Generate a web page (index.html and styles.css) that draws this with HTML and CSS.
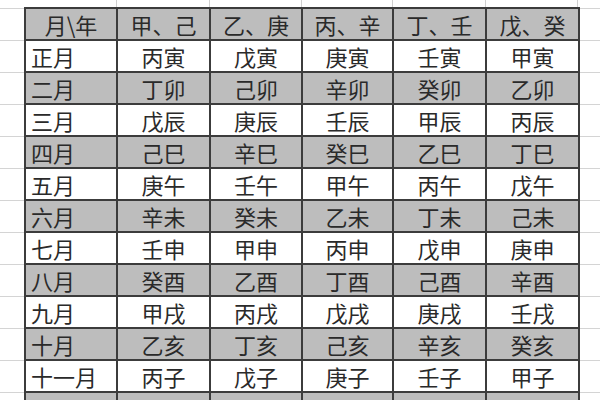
FILE: index.html
```html
<!DOCTYPE html>
<html lang="zh">
<head>
<meta charset="utf-8">
<link rel="stylesheet" href="styles.css">
<title>月干支表</title>
</head>
<body>
<div class="sheet">
  <div class="top-strip">
    <span class="tcell w0"></span>
    <span class="tcell w1"></span>
    <span class="tcell w2"></span>
    <span class="tcell w3"></span>
    <span class="tcell w4"></span>
    <span class="tcell w5"></span>
    <span class="tcell w6"></span>
  </div>
  <div class="row-wrap">
    <div class="side side-left"></div>
    <table class="cal">
      <colgroup>
        <col class="c1"><col class="c2"><col class="c3"><col class="c4"><col class="c5"><col class="c6">
      </colgroup>
      <tr class="shade head"><td class="ctr">月\年</td><td>甲、己</td><td>乙、庚</td><td>丙、辛</td><td>丁、壬</td><td>戊、癸</td></tr>
      <tr><td class="m">正月</td><td>丙寅</td><td>戊寅</td><td>庚寅</td><td>壬寅</td><td>甲寅</td></tr>
      <tr class="shade"><td class="m">二月</td><td>丁卯</td><td>己卯</td><td>辛卯</td><td>癸卯</td><td>乙卯</td></tr>
      <tr><td class="m">三月</td><td>戊辰</td><td>庚辰</td><td>壬辰</td><td>甲辰</td><td>丙辰</td></tr>
      <tr class="shade"><td class="m">四月</td><td>己巳</td><td>辛巳</td><td>癸巳</td><td>乙巳</td><td>丁巳</td></tr>
      <tr><td class="m">五月</td><td>庚午</td><td>壬午</td><td>甲午</td><td>丙午</td><td>戊午</td></tr>
      <tr class="shade"><td class="m">六月</td><td>辛未</td><td>癸未</td><td>乙未</td><td>丁未</td><td>己未</td></tr>
      <tr><td class="m">七月</td><td>壬申</td><td>甲申</td><td>丙申</td><td>戊申</td><td>庚申</td></tr>
      <tr class="shade"><td class="m">八月</td><td>癸酉</td><td>乙酉</td><td>丁酉</td><td>己酉</td><td>辛酉</td></tr>
      <tr><td class="m">九月</td><td>甲戌</td><td>丙戌</td><td>戊戌</td><td>庚戌</td><td>壬戌</td></tr>
      <tr class="shade"><td class="m">十月</td><td>乙亥</td><td>丁亥</td><td>己亥</td><td>辛亥</td><td>癸亥</td></tr>
      <tr><td class="m">十一月</td><td>丙子</td><td>戊子</td><td>庚子</td><td>壬子</td><td>甲子</td></tr>
      <tr class="shade"><td></td><td></td><td></td><td></td><td></td><td></td></tr>
    </table>
    <div class="side side-right"></div>
  </div>
</div>
</body>
</html>
```
FILE: styles.css
```css
html, body {
  margin: 0;
  padding: 0;
  overflow: hidden;
  width: 600px;
  height: 400px;
}
body {
  background-color: #fff;
  background-image: repeating-linear-gradient(
    to bottom,
    #d4d4d4 0px, #d4d4d4 1px,
    transparent 1px, transparent 32px
  );
  background-position: 0 8px;
  font-family: "Noto Sans CJK SC", "Noto Sans CJK JP", sans-serif;
  color: #2a2a2a;
}
.sheet {
  display: flex;
  flex-direction: column;
}
.top-strip {
  display: flex;
  height: 7px;
  background: #fff;
}
.tcell {
  display: block;
  height: 7px;
  border-right: 1px solid #d0d0d0;
  box-sizing: border-box;
}
.w0 { width: 25px; border-right: none; }
.w1 { width: 92px; }
.w2 { width: 93px; }
.w3 { width: 92px; }
.w4 { width: 91px; }
.w5 { width: 93px; }
.w6 { width: 92px; }
.row-wrap {
  display: flex;
  align-items: flex-start;
}
.side { flex: none; }
.side-left { width: 24px; }
.side-right { width: 24px; }
.cal {
  flex: none;
  border-collapse: collapse;
  table-layout: fixed;
  width: 554px;
}
.c1 { width: 92px; }
.c2 { width: 93px; }
.c3 { width: 92px; }
.c4 { width: 91px; }
.c5 { width: 93px; }
.c6 { width: 93px; }
.cal tr { height: 32px; background: #fff; }
.cal tr.shade { background: #bdbdbd; }
.cal td {
  border: 2px solid #3c3c3c;
  padding: 0;
  height: 30px;
  font-size: 22px;
  line-height: 28px;
  text-align: center;
  white-space: nowrap;
  overflow: hidden;
  vertical-align: middle;
}
.cal td.m {
  text-align: left;
  padding-left: 5px;
}
.cal td.ctr { text-align: center; }
```
